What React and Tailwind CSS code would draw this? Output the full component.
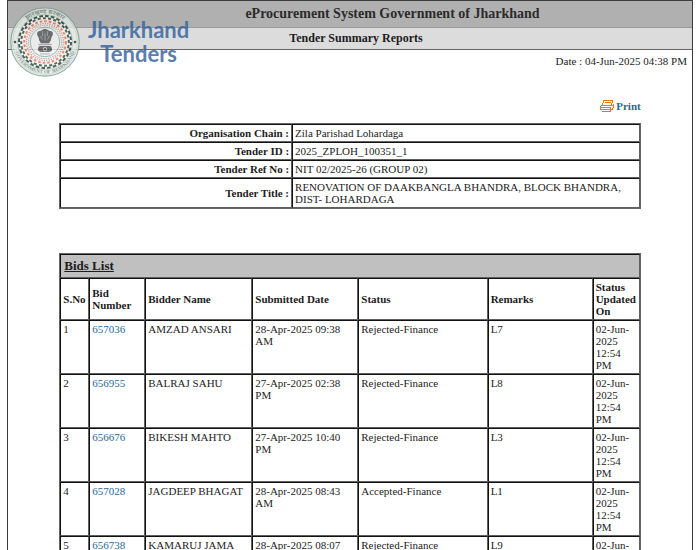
import React from "react";

const details = [
  ["Organisation Chain :", "Zila Parishad Lohardaga"],
  ["Tender ID :", "2025_ZPLOH_100351_1"],
  ["Tender Ref No :", "NIT 02/2025-26 (GROUP 02)"],
  ["Tender Title :", "RENOVATION OF DAAKBANGLA BHANDRA, BLOCK BHANDRA, DIST- LOHARDAGA"],
];

const columns = ["S.No", "Bid Number", "Bidder Name", "Submitted Date", "Status", "Remarks", "Status Updated On"];

const bids = [
  ["657036", "AMZAD ANSARI", "28-Apr-2025 09:38 AM", "Rejected-Finance", "L7"],
  ["656955", "BALRAJ SAHU", "27-Apr-2025 02:38 PM", "Rejected-Finance", "L8"],
  ["656676", "BIKESH MAHTO", "27-Apr-2025 10:40 PM", "Rejected-Finance", "L3"],
  ["657028", "JAGDEEP BHAGAT", "28-Apr-2025 08:43 AM", "Accepted-Finance", "L1"],
  ["656738", "KAMARUJ JAMA", "28-Apr-2025 08:07 AM", "Rejected-Finance", "L9"],
];

const cell = "border border-t-[#111] border-l-[#111] border-r-[#606060] border-b-[#606060] p-0.5";
const table = "mx-auto w-[85%] table-fixed border-separate border-spacing-0 border border-[#666] text-[11px] leading-3";

function Seal() {
  return (
    <svg viewBox="0 0 70 70" className="size-[70px] shrink-0 opacity-80" role="img" aria-label="Government of Jharkhand seal">
      <defs>
        <path id="seal-top" d="M6.5 35a28.5 28.5 0 0 1 57 0" />
        <path id="seal-bottom" d="M3.5 35a31.5 31.5 0 0 0 63 0" />
      </defs>
      <circle cx="35" cy="35" r="34.2" fill="#e6ebe8" stroke="#7fa091" strokeWidth="1.2" />
      <circle cx="35" cy="35" r="32.4" fill="none" stroke="#b3c8be" strokeWidth=".6" />
      <text fontSize="6" fontWeight="700" fill="#78877f" fontFamily="'Noto Sans', sans-serif">
        <textPath href="#seal-top" startOffset="50%" textAnchor="middle">झारखण्ड सरकार</textPath>
      </text>
      <text fontSize="5" fontWeight="700" fill="#6c8578" fontFamily="'Liberation Serif', serif">
        <textPath href="#seal-bottom" startOffset="50%" textAnchor="middle">GOVERNMENT OF JHARKHAND</textPath>
      </text>
      <circle cx="5" cy="35" r="1.3" fill="#26342d" />
      <circle cx="65" cy="35" r="1.3" fill="#26342d" />
      <circle cx="35" cy="35" r="27.4" fill="#f4f3f1" stroke="#8ba99b" strokeWidth=".6" />
      <circle cx="35" cy="35" r="26" fill="none" stroke="#1f3f32" strokeWidth="2" strokeDasharray="3.6 2.2" />
      <circle cx="35" cy="35" r="23.8" fill="none" stroke="#2c4c3d" strokeWidth="2" strokeDasharray="3 2.3" strokeDashoffset="2" />
      <circle cx="35" cy="35" r="20.8" fill="none" stroke="#f0704e" strokeWidth="2" strokeDasharray="2.6 2" />
      <circle cx="35" cy="35" r="18.5" fill="none" stroke="#b98f8c" strokeWidth="1.4" strokeDasharray="1.2 1.2" />
      <circle cx="35" cy="35" r="16.6" fill="none" stroke="#b4a5a5" strokeWidth="1.2" strokeDasharray="1.4 1" />
      <circle cx="35" cy="35" r="14.8" fill="#eef0ef" stroke="#7ea090" strokeWidth=".9" />
      <g transform="translate(-7 -7) scale(1.2)">
        <g fill="#4e5353">
          <path d="M32 25.5q3-3 6 0l2.4.5q1.8 1 .9 3.5l-.9 1.6-.6 2.7-1.4 2.2h-6.8l-1.4-2.2-.6-2.7-.9-1.6q-.9-2.5.9-3.5z" />
          <path d="M29.5 36.5h11v1.2h-11z" opacity=".5" />
          <path d="M30.5 38.4h9q2 1.5 1 4l-2 1h-7l-2-1q-1-2.5 1-4z" />
          <path d="M31 44.6h8v.7h-8z" opacity=".6" />
        </g>
        <path d="M33 26v4m4-4v4m-5.6 0 1.4 3m5.8-3-1.4 3M35 28v6" stroke="#a4aaaa" strokeWidth=".6" fill="none" />
        <circle cx="35" cy="40.9" r="1.5" fill="none" stroke="#dfe3e2" strokeWidth=".6" />
      </g>
    </svg>
  );
}

function PrinterIcon() {
  return (
    <svg viewBox="0 0 14 12" className="h-3 w-3.5" fill="none" stroke="#f07800" shapeRendering="crispEdges" aria-hidden="true">
      <path d="M3 .5h10M3.5 0v3M2.5 3v2M12.5 0v3M11.5 3v2M5 2.5h6" />
      <path d="M1 5.5h12M.5 6v4M13.5 4v4M0 7.5h11M10.5 7v4M1 9.5h11M12.5 8v2M2 11.5h9" />
    </svg>
  );
}

export default function App() {
  return (
    <div className="h-screen overflow-hidden bg-white px-[7px] font-['Liberation_Serif','Times_New_Roman',serif] text-[#1c1c1c]">
      <div className="relative border border-b-0 border-[#3c3c3c]">
        <header>
          <h1 className="h-[27px] border-b border-[#999] bg-[#b0b0b0] pl-[85px] text-center text-[14px] leading-[25px] font-bold text-[#2b2b2b]">
            eProcurement System Government of Jharkhand
          </h1>
          <h2 className="h-[22px] border-b border-[#666] bg-[#dcdcdc] pl-3 text-center text-[12px] leading-5 font-bold">
            Tender Summary Reports
          </h2>
        </header>

        <div className="absolute top-1.5 left-0.5 flex gap-2">
          <Seal />
          <div className="pt-[11px] text-center font-[Lato,sans-serif] text-[22px] leading-6 font-bold text-[#30609c] opacity-80">
            Jharkhand
            <br />
            Tenders
          </div>
        </div>

        <p className="pt-[5px] pr-[5px] text-right text-[11px] leading-3">Date : 04-Jun-2025 04:38 PM</p>

        <div className="mx-auto flex h-14 w-[85%] items-end justify-end pb-[11px]">
          <button type="button" className="flex items-center gap-0.5 text-[11px] leading-3 font-bold text-[#276a9b]">
            <PrinterIcon />
            Print
          </button>
        </div>

        <table className={table}>
          <colgroup>
            <col className="w-2/5" />
            <col />
          </colgroup>
          <tbody>
            {details.map(([label, value]) => (
              <tr key={label}>
                <th scope="row" className={`${cell} text-right font-bold`}>{label}</th>
                <td className={cell}>{value}</td>
              </tr>
            ))}
          </tbody>
        </table>

        <table className={`${table} mt-11`}>
          <colgroup>
            <col className="w-[5%]" />
            <col className="w-14" />
            <col className="w-[107px]" />
            <col className="w-[106px]" />
            <col />
            <col className="w-[105px]" />
            <col className="w-[47px]" />
          </colgroup>
          <thead>
            <tr className="h-6">
              <th colSpan={7} className={`${cell} bg-[#c0c0c0] pl-[3px] text-left text-[13px] underline`}>Bids List</th>
            </tr>
            <tr>
              {columns.map((name) => (
                <th key={name} scope="col" className={`${cell} text-left`}>{name}</th>
              ))}
            </tr>
          </thead>
          <tbody>
            {bids.map(([number, bidder, date, status, remarks], i) => (
              <tr key={number} className="align-top">
                <td className={cell}>{i + 1}</td>
                <td className={cell}><a href="#bid" className="text-[#276a9b]">{number}</a></td>
                <td className={cell}>{bidder}</td>
                <td className={cell}>{date}</td>
                <td className={cell}>{status}</td>
                <td className={cell}>{remarks}</td>
                <td className={cell}>02-Jun-2025 12:54 PM</td>
              </tr>
            ))}
          </tbody>
        </table>
      </div>
    </div>
  );
}
